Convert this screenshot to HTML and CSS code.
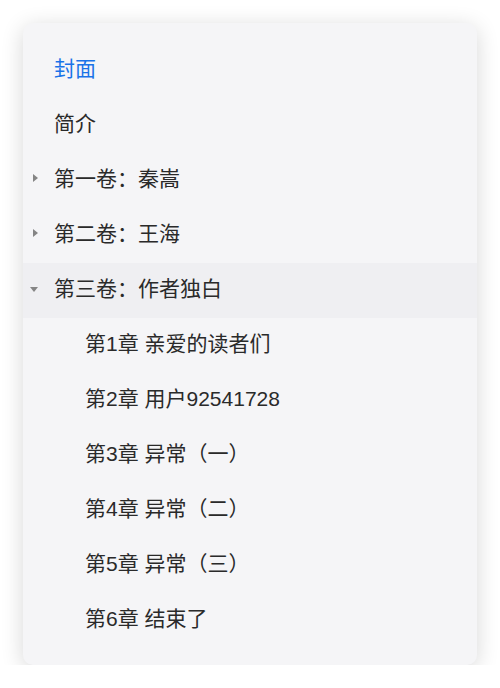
FILE: index.html
```html
<!DOCTYPE html>
<html lang="zh-CN">
<head>
  <meta charset="UTF-8" />
  <title>目录</title>
  <link rel="stylesheet" href="styles.css">
</head>
<body>

  <!-- Table of Contents -->
  <div class="toc">
    <div class="row active">封面</div>
    <div class="row">简介</div>
    <div class="row"><span class="arrow right"></span>第一卷：秦嵩</div>
    <div class="row"><span class="arrow right"></span>第二卷：王海</div>
    <div class="row open"><span class="arrow down"></span>第三卷：作者独白</div>
    <div class="row sub">第1章 亲爱的读者们</div>
    <div class="row sub">第2章 用户92541728</div>
    <div class="row sub">第3章 异常（一）</div>
    <div class="row sub">第4章 异常（二）</div>
    <div class="row sub">第5章 异常（三）</div>
    <div class="row sub">第6章 结束了</div>
  </div>

</body>
</html>
```

FILE: styles.css
```css
body {
  margin: 0;
  padding: 23px 23px 0 23px;
  background-color: #ffffff;
  font-family: "Liberation Sans", "Noto Sans CJK SC", sans-serif;
}

.toc {
  width: 454px;
  padding: 20px 0 17px 0;
  background-color: #f5f5f7;
  border-radius: 10px;
  box-shadow: 0 4px 22px rgba(0, 0, 0, 0.16);
}

.row {
  position: relative;
  box-sizing: border-box;
  height: 55px;
  line-height: 51px;
  padding-bottom: 4px;
  padding-left: 31px;
  font-size: 21px;
  color: #2a2a2a;
}

.row.active {
  color: #1a73e8;
}

.row.open {
  background-color: #efeff2;
}

.row.sub {
  padding-left: 62px;
}

/* Expand / collapse triangles */
.arrow {
  position: absolute;
  width: 0;
  height: 0;
}

.arrow.right {
  left: 10px;
  top: 21px;
  border-top: 4.5px solid transparent;
  border-bottom: 4.5px solid transparent;
  border-left: 5px solid #858585;
}

.arrow.down {
  left: 7px;
  top: 24px;
  border-left: 4.5px solid transparent;
  border-right: 4.5px solid transparent;
  border-top: 5px solid #858585;
}
```
